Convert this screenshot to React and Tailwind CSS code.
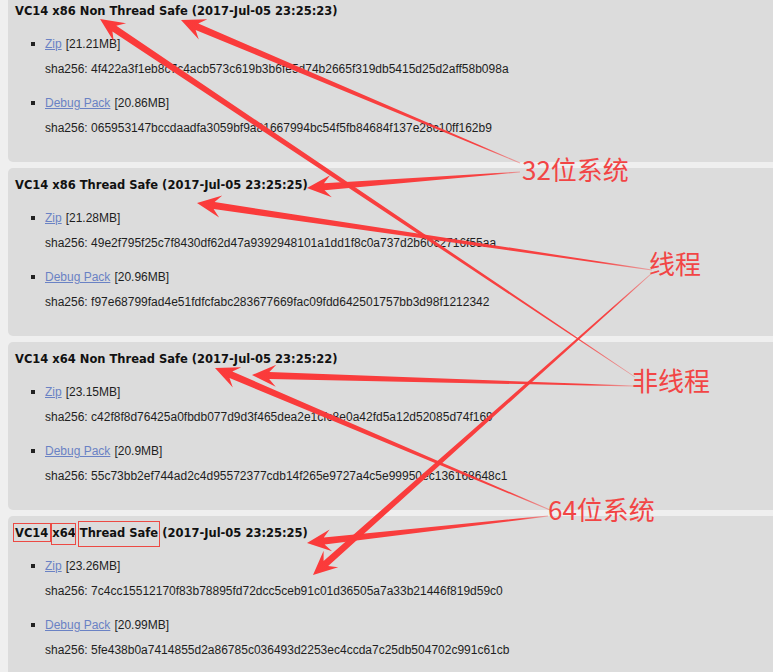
import React from 'react';

const builds = [
  {
    title: 'VC14 x86 Non Thread Safe (2017-Jul-05 23:25:23)',
    files: [
      { name: 'Zip', size: '21.21MB', sha: '4f422a3f1eb8c7c4acb573c619b3b6fe5d74b2665f319db5415d25d2aff58b098a' },
      { name: 'Debug Pack', size: '20.86MB', sha: '065953147bccdaadfa3059bf9a81667994bc54f5fb84684f137e28c10ff162b9' },
    ],
  },
  {
    title: 'VC14 x86 Thread Safe (2017-Jul-05 23:25:25)',
    files: [
      { name: 'Zip', size: '21.28MB', sha: '49e2f795f25c7f8430df62d47a9392948101a1dd1f8c0a737d2b60c2716f55aa' },
      { name: 'Debug Pack', size: '20.96MB', sha: 'f97e68799fad4e51fdfcfabc283677669fac09fdd642501757bb3d98f1212342' },
    ],
  },
  {
    title: 'VC14 x64 Non Thread Safe (2017-Jul-05 23:25:22)',
    files: [
      { name: 'Zip', size: '23.15MB', sha: 'c42f8f8d76425a0fbdb077d9d3f465dea2e1cfc8e0a42fd5a12d52085d74f169' },
      { name: 'Debug Pack', size: '20.9MB', sha: '55c73bb2ef744ad2c4d95572377cdb14f265e9727a4c5e99950ec136168648c1' },
    ],
  },
  {
    title: null,
    files: [
      { name: 'Zip', size: '23.26MB', sha: '7c4cc15512170f83b78895fd72dcc5ceb91c01d36505a7a33b21446f819d59c0' },
      { name: 'Debug Pack', size: '20.99MB', sha: '5fe438b0a7414855d2a86785c036493d2253ec4ccda7c25db504702c991c61cb' },
    ],
  },
];

// tail (label side) -> tip (arrow head)
const arrows = [
  [520, 163, 181, 20],
  [520, 172, 307, 188],
  [652, 270, 197, 203],
  [652, 273, 313, 575],
  [635, 377, 100, 19],
  [633, 386, 252, 375],
  [550, 510, 215, 368],
  [548, 516, 307, 543],
];

const labels = [
  { text: '32位系统', left: 'left-[522px]', top: 'top-[153px]' },
  { text: '线程', left: 'left-[649px]', top: 'top-[247px]' },
  { text: '非线程', left: 'left-[632px]', top: 'top-[364px]' },
  { text: '64位系统', left: 'left-[548px]', top: 'top-[493px]' },
];

function arrowPoints(x1, y1, x2, y2, w = 7, hl = 24, hw = 11) {
  const dx = x2 - x1;
  const dy = y2 - y1;
  const len = Math.hypot(dx, dy);
  const ux = dx / len;
  const uy = dy / len;
  const nx = -uy;
  const ny = ux;
  const bx = x2 - ux * hl;
  const by = y2 - uy * hl;
  const mx = x2 - ux * hl * 0.72;
  const my = y2 - uy * hl * 0.72;
  const pts = [
    [x1 + nx * 0.4, y1 + ny * 0.4],
    [mx + nx * w / 2, my + ny * w / 2],
    [bx + nx * hw, by + ny * hw],
    [x2, y2],
    [bx - nx * hw, by - ny * hw],
    [mx - nx * w / 2, my - ny * w / 2],
    [x1 - nx * 0.4, y1 - ny * 0.4],
  ];
  return pts.map((p) => p.map((v) => v.toFixed(1)).join(',')).join(' ');
}

function Boxed({ children, box }) {
  return (
    <span className="relative">
      {children}
      <span className={`absolute border border-[#ec4a44] ${box}`} />
    </span>
  );
}

function Heading({ title }) {
  if (title) return <h3 className="h-4 leading-4">{title}</h3>;
  return (
    <h3 className="h-4 leading-4">
      <Boxed box="-left-[2px] -right-[3px] -top-[3px] -bottom-[2px]">VC14</Boxed>{' '}
      <Boxed box="-left-[1px] right-0 -top-[3px] -bottom-[5px]">x64</Boxed>{' '}
      <Boxed box="-left-[2px] -right-[2px] -top-[5px] -bottom-[7px]">Thread Safe</Boxed>{' '}
      (2017-Jul-05 23:25:25)
    </h3>
  );
}

function Panel({ build, first }) {
  return (
    <div className={`bg-[#dcdcdc] rounded-[5px] pl-[7px] pt-[9px] pb-[26px] ${first ? '-mt-[6px]' : ''}`}>
      <div className="font-['DejaVu_Sans',sans-serif] font-bold text-[11.5px] text-[#111]">
        <Heading title={build.title} />
      </div>
      <ul className="mt-[17px] pl-[30px] text-[12px] text-[#1e1e1e] font-['Liberation_Sans',Arial,sans-serif]">
        {build.files.map((f, i) => (
          <li key={f.name} className={i > 0 ? 'mt-[18px]' : ''}>
            <div className="flex items-center h-4 leading-4 -ml-[14px]">
              <span className="w-1 h-1 bg-[#222] mr-[10px]" />
              <a href="#" className="text-[#6a82c4] underline">{f.name}</a>
              <span className="ml-1">[{f.size}]</span>
            </div>
            <p className="mt-[9px] h-4 leading-4 whitespace-nowrap">sha256: {f.sha}</p>
          </li>
        ))}
      </ul>
    </div>
  );
}

export default function App() {
  return (
    <div className="relative w-[773px] h-[672px] overflow-hidden bg-[#efefef]">
      <div className="flex flex-col gap-[6px] pl-2 -mr-4">
        {builds.map((b, i) => (
          <Panel key={i} build={b} first={i === 0} />
        ))}
      </div>

      <svg className="absolute inset-0 pointer-events-none" width="773" height="672">
        <defs>
          {arrows.map(([x1, y1, x2, y2], i) => (
            <linearGradient key={i} id={`ag${i}`} gradientUnits="userSpaceOnUse" x1={x1} y1={y1} x2={x2} y2={y2}>
              <stop offset="0" stopColor="#f83a3a" stopOpacity="0.35" />
              <stop offset="0.12" stopColor="#f83a3a" stopOpacity="0.95" />
              <stop offset="1" stopColor="#fb3a3a" stopOpacity="1" />
            </linearGradient>
          ))}
        </defs>
        {arrows.map(([x1, y1, x2, y2], i) => (
          <polygon key={i} points={arrowPoints(x1, y1, x2, y2)} fill={`url(#ag${i})`} />
        ))}
      </svg>

      {labels.map((l) => (
        <span
          key={l.text}
          className={`absolute ${l.left} ${l.top} text-[26px] leading-[32px] text-[#f24545] font-['Noto_Sans_CJK_SC',sans-serif] whitespace-nowrap`}
        >
          {l.text}
        </span>
      ))}
    </div>
  );
}
